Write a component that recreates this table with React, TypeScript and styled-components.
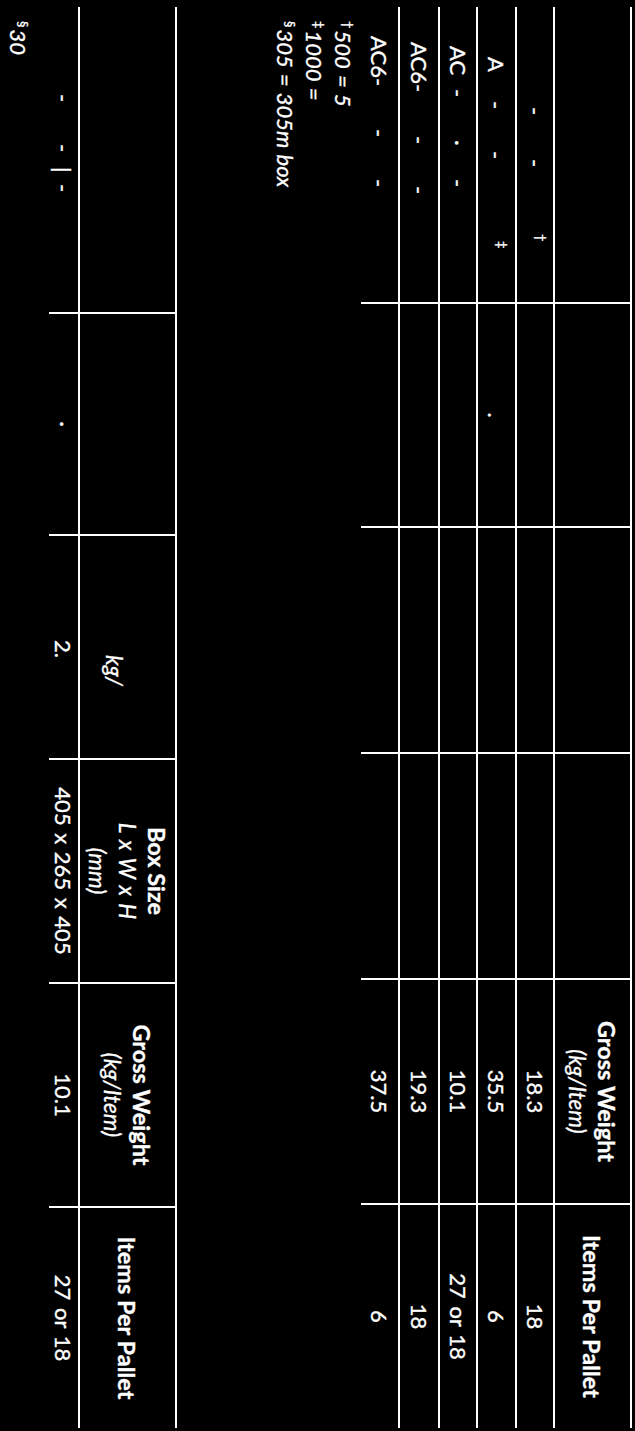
import React from "react";
import styled, { createGlobalStyle } from "styled-components";

type Frag = { t: string; at: number; sup?: boolean };

type TopRow = {
  id: string;
  frags: Frag[];
  h: number;
  dot?: string;
  weight: string;
  pallet: string;
};

const TABLE_LEFT = 7;

// fragments of the first column, "at" = start offset along the row (px)
const topRows: TopRow[] = [
  {
    id: "r1",
    h: 38,
    frags: [
      { t: "-", at: 107 },
      { t: "-", at: 159 },
      { t: "†", at: 234, sup: true },
    ],
    weight: "18.3",
    pallet: "18",
  },
  {
    id: "r2",
    h: 39,
    frags: [
      { t: "A", at: 57 },
      { t: "-", at: 101 },
      { t: "-", at: 151 },
      { t: "‡", at: 241, sup: true },
    ],
    dot: ".",
    weight: "35.5",
    pallet: "6",
  },
  {
    id: "r3",
    h: 38,
    frags: [
      { t: "AC", at: 46 },
      { t: "-", at: 89 },
      { t: "·", at: 140 },
      { t: "-", at: 179 },
    ],
    weight: "10.1",
    pallet: "27 or 18",
  },
  {
    id: "r4",
    h: 40,
    frags: [
      { t: "AC6-", at: 42 },
      { t: "-", at: 136 },
      { t: "-", at: 186 },
    ],
    weight: "19.3",
    pallet: "18",
  },
  {
    id: "r5",
    h: 39,
    frags: [
      { t: "AC6-", at: 36 },
      { t: "-", at: 129 },
      { t: "-", at: 179 },
    ],
    weight: "37.5",
    pallet: "6",
  },
];

const boxFrags: Frag[] = [
  { t: "-", at: 94 },
  { t: "-", at: 144 },
  { t: "|", at: 167 },
  { t: "-", at: 184 },
];

const GlobalStyle = createGlobalStyle`
  html, body {
    margin: 0;
    padding: 0;
    background: #000;
  }
  body {
    width: 635px;
    height: 1431px;
    overflow: hidden;
    color: #fff;
    font-family: Lato, "Open Sans", "Liberation Sans", sans-serif;
    -webkit-text-stroke: 0.35px #fff;
  }
`;

// the scanned page lies on its side: lay it out upright, then turn it
const Sheet = styled.div`
  box-sizing: border-box;
  width: 1431px;
  height: 635px;
  padding-top: 3px;
  display: flex;
  flex-direction: column;
  transform-origin: 0 0;
  transform: translate(635px, 0) rotate(90deg);
`;

const Table = styled.div<{ $cols: number[]; $top?: number }>`
  display: grid;
  grid-template-columns: ${(p) => p.$cols.map((c) => `${c}px`).join(" ")};
  margin: ${(p) => p.$top ?? 0}px 0 0 ${TABLE_LEFT}px;
`;

const Cell = styled.div<{ $h: number; $lead?: boolean }>`
  box-sizing: border-box;
  height: ${(p) => p.$h}px;
  border-top: 2px solid #fff;
  border-left: ${(p) => (p.$lead ? "none" : "2px solid #fff")};
  display: flex;
  flex-direction: column;
  justify-content: center;
  align-items: center;
  text-align: center;
  font-size: 22px;
  line-height: 30px;
  word-spacing: 2px;
  white-space: nowrap;
`;

const OffsetCell = styled(Cell)<{ $padLeft: number; $padTop?: number }>`
  align-items: flex-start;
  padding-left: ${(p) => p.$padLeft}px;
  padding-top: ${(p) => p.$padTop ?? 0}px;
`;

const FragCell = styled(Cell)`
  flex-direction: row;
  justify-content: flex-start;
  align-items: center;
`;

const Slot = styled.span<{ $w?: number }>`
  display: inline-block;
  flex: none;
  width: ${(p) => (p.$w ? `${p.$w}px` : "auto")};
  text-align: left;
`;

const Mark = styled.span`
  font-size: 13px;
  line-height: 13px;
  position: relative;
  top: -9px;
`;

const Strong = styled.span`
  font-weight: 700;
  font-size: 23.5px;
  word-spacing: 0;
`;

const Em = styled.span`
  font-style: italic;
  font-size: 22.5px;
`;

const Notes = styled.div<{ $top: number }>`
  margin: ${(p) => p.$top}px 0 0 21px;
  font-size: 22px;
  line-height: 29px;
  font-style: italic;
  word-spacing: 1px;
`;

const Note = styled.div`
  white-space: nowrap;
`;

const NoteMark = styled.span`
  display: inline-block;
  font-style: normal;
  font-size: 13px;
  line-height: 13px;
  margin-right: 2px;
  position: relative;
  top: -8px;
`;

const Frags = ({ frags }: { frags: Frag[] }) => (
  <>
    <Slot $w={frags[0].at - TABLE_LEFT} />
    {frags.map((f, i) => {
      const next = frags[i + 1];
      return (
        <Slot key={i} $w={next ? next.at - f.at : undefined}>
          {f.sup ? <Mark>{f.t}</Mark> : f.t}
        </Slot>
      );
    })}
  </>
);

export default function App() {
  const topCols = [295, 224, 226, 226, 225, 225];
  const boxCols = [305, 222, 224, 224, 224, 222];

  return (
    <>
      <GlobalStyle />
      <Sheet>
        <Table $cols={topCols}>
          <Cell $h={77} $lead />
          <Cell $h={77} />
          <Cell $h={77} />
          <Cell $h={77} />
          <Cell $h={77}>
            <Strong>Gross Weight</Strong>
            <Em>(kg/Item)</Em>
          </Cell>
          <Cell $h={77}>
            <Strong>Items Per Pallet</Strong>
          </Cell>

          {topRows.map((r) => (
            <React.Fragment key={r.id}>
              <FragCell $h={r.h} $lead>
                <Frags frags={r.frags} />
              </FragCell>
              <Cell $h={r.h}>{r.dot}</Cell>
              <Cell $h={r.h} />
              <Cell $h={r.h} />
              <Cell $h={r.h}>{r.weight}</Cell>
              <Cell $h={r.h}>{r.pallet}</Cell>
            </React.Fragment>
          ))}
        </Table>

        <Notes $top={3}>
          <Note>
            <NoteMark>†</NoteMark>500 = 5
          </Note>
          <Note>
            <NoteMark>‡</NoteMark>1000 =
          </Note>
          <Note>
            <NoteMark>§</NoteMark>305 = 305m box
          </Note>
        </Notes>

        <Table $cols={boxCols} $top={94}>
          <Cell $h={97} $lead />
          <Cell $h={97} />
          <OffsetCell $h={97} $padLeft={119} $padTop={26}>
            <Em>kg/</Em>
          </OffsetCell>
          <Cell $h={97}>
            <Strong>Box Size</Strong>
            <Em>L x W x H</Em>
            <Em>(mm)</Em>
          </Cell>
          <Cell $h={97}>
            <Strong>Gross Weight</Strong>
            <Em>(kg/Item)</Em>
          </Cell>
          <Cell $h={97}>
            <Strong>Items Per Pallet</Strong>
          </Cell>

          <FragCell $h={31} $lead>
            <Frags frags={boxFrags} />
          </FragCell>
          <Cell $h={31}>·</Cell>
          <OffsetCell $h={31} $padLeft={104}>
            2.
          </OffsetCell>
          <Cell $h={31}>405 x 265 x 405</Cell>
          <Cell $h={31}>10.1</Cell>
          <Cell $h={31}>27 or 18</Cell>
        </Table>

        <Notes $top={16}>
          <Note>
            <NoteMark>§</NoteMark>30
          </Note>
        </Notes>
      </Sheet>
    </>
  );
}
